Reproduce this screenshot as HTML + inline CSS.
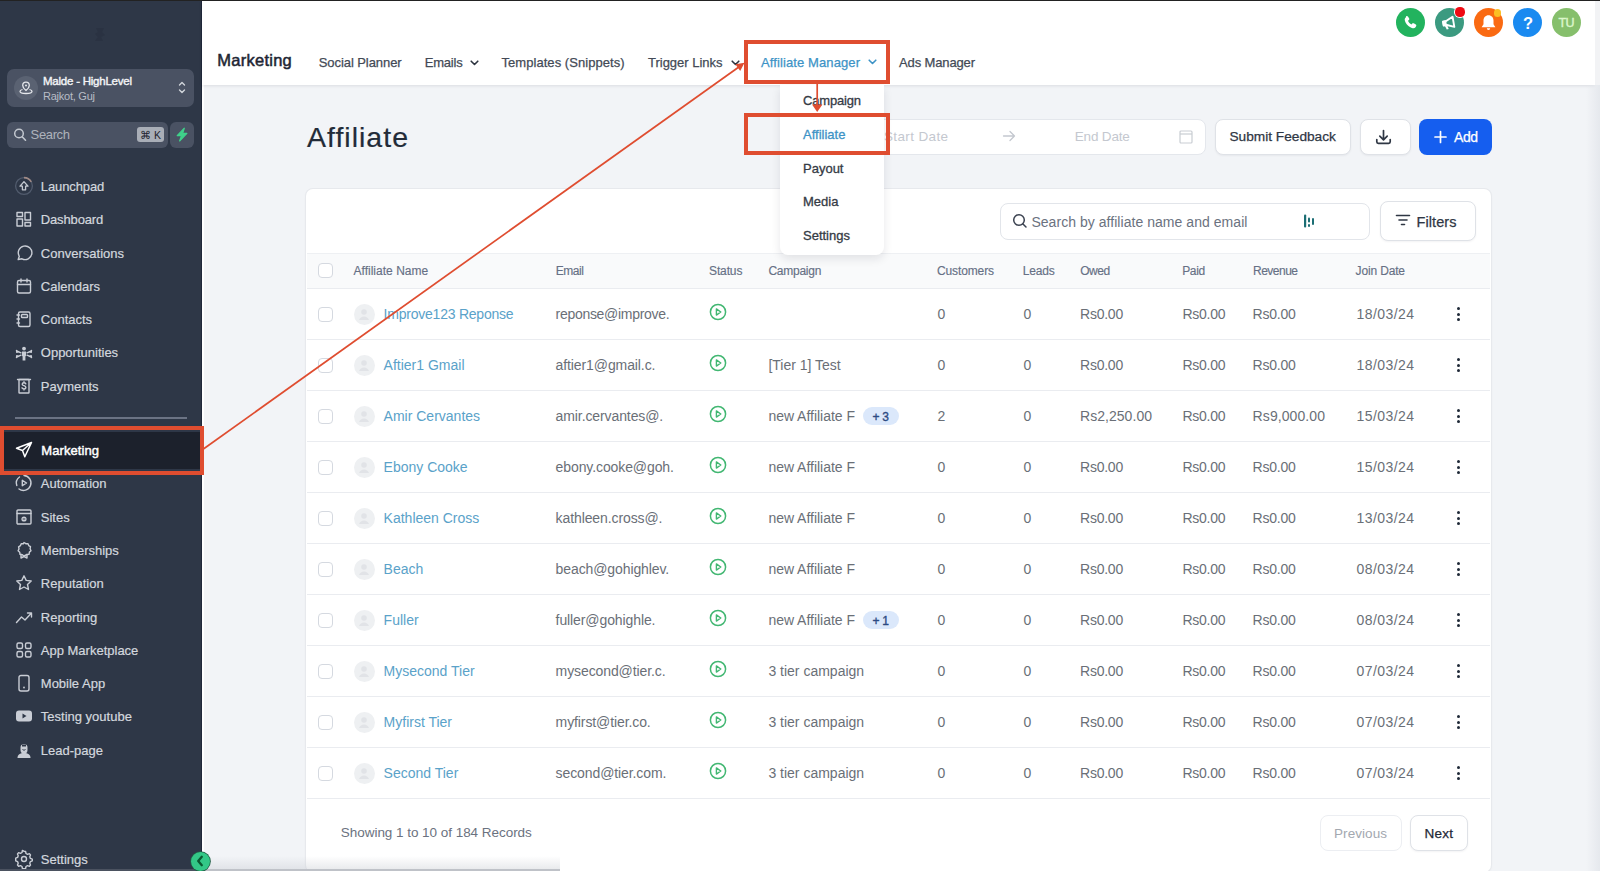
<!DOCTYPE html>
<html><head><meta charset="utf-8">
<style>
*{box-sizing:border-box;margin:0;padding:0}
html,body{width:1600px;height:871px;overflow:hidden;background:#f2f4f7}
body{position:relative;font-family:"Liberation Sans",sans-serif}
.a{position:absolute}
.t{position:absolute;white-space:nowrap;line-height:1}
svg.a{overflow:visible}
</style></head><body>
<div class="a" style="left:0px;top:0px;width:1600px;height:871px;background:#f2f4f7"></div>
<div class="a" style="left:0px;top:0px;width:202px;height:871px;background:#2e3747"></div>
<div class="a" style="left:201px;top:0px;width:1px;height:871px;background:#20283a"></div>
<div class="a" style="left:202px;top:0px;width:2px;height:871px;background:#fff"></div>
<div class="a" style="left:202px;top:0px;width:1393px;height:85px;background:#fff;box-shadow:0 1px 3px rgba(16,24,40,.10)"></div>
<div class="a" style="left:1586px;top:85px;width:14px;height:786px;background:linear-gradient(to right, rgba(228,231,236,0), rgba(228,231,236,.9))"></div>
<div class="a" style="left:1595px;top:1px;width:5px;height:84px;background:#f2f3f5"></div>
<div class="a" style="left:0px;top:0px;width:1600px;height:1px;background:#222"></div>
<svg class="a" style="left:90px;top:24px;" width="20" height="20" viewBox="0 0 20 20"><path d="M6 4h8l-2 4 3 3-4 2 2 4H5l3-4-3-3 3-2z" fill="#262d3c" opacity=".45"/></svg>
<div class="a" style="left:7px;top:69px;width:187px;height:38px;background:#4a5263;border-radius:7px"></div>
<div class="a" style="left:14px;top:76px;width:24px;height:24px;border-radius:50%;background:#5a6272"></div>
<svg class="a" style="left:19px;top:80px;" width="14" height="15" viewBox="0 0 14 15"><path d="M7 2.2a3.3 3.3 0 0 1 3.3 3.3c0 2.3-3.3 5-3.3 5s-3.3-2.7-3.3-5A3.3 3.3 0 0 1 7 2.2z" fill="none" stroke="#e5e7eb" stroke-width="1.3"/><circle cx="7" cy="5.5" r="1" fill="#e5e7eb"/><path d="M3.5 9.5C1.8 10 1 10.6 1 11.3 1 12.6 3.7 13.5 7 13.5s6-.9 6-2.2c0-.7-.8-1.3-2.5-1.8" fill="none" stroke="#e5e7eb" stroke-width="1.3"/></svg>
<div class="t" style="left:43.0px;top:75.8px;font-size:11.5px;color:#f3f4f6;font-weight:normal;letter-spacing:-0.230px;-webkit-text-stroke:0.4px #f3f4f6;">Malde - HighLevel</div>
<div class="t" style="left:43.0px;top:90.5px;font-size:11px;color:#b8bdc6;font-weight:normal;letter-spacing:-0.241px;">Rajkot, Guj</div>
<svg class="a" style="left:177px;top:80px;" width="10" height="15" viewBox="0 0 10 15"><path d="M2.5 5 5 2.5 7.5 5M2.5 10 5 12.5 7.5 10" fill="none" stroke="#d1d5db" stroke-width="1.4" stroke-linecap="round" stroke-linejoin="round"/></svg>
<div class="a" style="left:7px;top:122px;width:161px;height:26px;background:#4a5263;border-radius:6px"></div>
<svg class="a" style="left:13px;top:127px;" width="14" height="15" viewBox="0 0 14 15"><circle cx="6" cy="6.5" r="4.3" fill="none" stroke="#c2c7cf" stroke-width="1.5"/><path d="M9.2 9.8 12.5 13.2" stroke="#c2c7cf" stroke-width="1.6" stroke-linecap="round"/></svg>
<div class="t" style="left:30.6px;top:127.8px;font-size:13px;color:#aeb3bc;font-weight:normal;letter-spacing:-0.358px;">Search</div>
<div class="a" style="left:137px;top:127px;width:27px;height:15px;background:#a9aeb7;border-radius:3px"></div>
<div class="t" style="left:140.0px;top:129.7px;font-size:10.5px;color:#1f2530;font-weight:normal;">⌘</div>
<div class="t" style="left:154.0px;top:129.7px;font-size:10.5px;color:#1f2530;font-weight:normal;">K</div>
<div class="a" style="left:170px;top:122px;width:24px;height:26px;background:#4a5263;border-radius:6px"></div>
<svg class="a" style="left:175px;top:127px;" width="14" height="15" viewBox="0 0 14 15"><path d="M9.3 1.2 2.2 8.6h4.3L4.6 14 11.9 6.4H7.6z" fill="#3fd18a" stroke="#3fd18a" stroke-width="1.2" stroke-linejoin="round"/></svg>
<svg class="a" style="left:15px;top:177.0px;" width="18" height="18" viewBox="0 0 18 18"><circle cx="9" cy="9" r="8.4" fill="none" stroke="#525c6e" stroke-width="1.3"/><path d="M9 .6a8.4 8.4 0 0 1 7.3 4.3" fill="none" stroke="#a08a86" stroke-width="1.6"/><path d="M9 4.6 5 9.2h2.4v3.6h3.2V9.2H13z" fill="none" stroke="#c3c8d0" stroke-width="1.3" stroke-linejoin="round"/></svg>
<div class="t" style="left:40.8px;top:179.9px;font-size:13px;color:#d3d7de;font-weight:normal;letter-spacing:-0.104px;-webkit-text-stroke:0.2px #d3d7de;">Launchpad</div>
<svg class="a" style="left:15px;top:210.3px;" width="18" height="18" viewBox="0 0 18 18"><rect x="2" y="2.5" width="5.5" height="4" fill="none" stroke="#c9cdd5" stroke-width="1.4" stroke-linecap="round" stroke-linejoin="round"/><rect x="10" y="2.5" width="5.5" height="7.5" fill="none" stroke="#c9cdd5" stroke-width="1.4" stroke-linecap="round" stroke-linejoin="round"/><rect x="2" y="9" width="5.5" height="7" fill="none" stroke="#c9cdd5" stroke-width="1.4" stroke-linecap="round" stroke-linejoin="round"/><rect x="10" y="12.5" width="5.5" height="3.5" fill="none" stroke="#c9cdd5" stroke-width="1.4" stroke-linecap="round" stroke-linejoin="round"/></svg>
<div class="t" style="left:40.8px;top:213.2px;font-size:13px;color:#d3d7de;font-weight:normal;letter-spacing:-0.149px;-webkit-text-stroke:0.2px #d3d7de;">Dashboard</div>
<svg class="a" style="left:15px;top:243.60000000000002px;" width="18" height="18" viewBox="0 0 18 18"><path d="M3.2 15.5 4.3 12.3A6.8 6.8 0 1 1 7 14.8z" fill="none" stroke="#c9cdd5" stroke-width="1.4" stroke-linecap="round" stroke-linejoin="round"/></svg>
<div class="t" style="left:40.8px;top:246.6px;font-size:13px;color:#d3d7de;font-weight:normal;letter-spacing:0.017px;-webkit-text-stroke:0.2px #d3d7de;">Conversations</div>
<svg class="a" style="left:15px;top:277.0px;" width="18" height="18" viewBox="0 0 18 18"><rect x="2.5" y="3.5" width="13" height="12.5" rx="1.5" fill="none" stroke="#c9cdd5" stroke-width="1.4" stroke-linecap="round" stroke-linejoin="round"/><path d="M2.5 7.5h13M6 2v3M12 2v3" fill="none" stroke="#c9cdd5" stroke-width="1.4" stroke-linecap="round" stroke-linejoin="round"/></svg>
<div class="t" style="left:40.8px;top:279.9px;font-size:13px;color:#d3d7de;font-weight:normal;-webkit-text-stroke:0.2px #d3d7de;">Calendars</div>
<svg class="a" style="left:15px;top:310.2px;" width="18" height="18" viewBox="0 0 18 18"><rect x="3.5" y="2" width="11.5" height="14.5" rx="1.5" fill="none" stroke="#c9cdd5" stroke-width="1.4" stroke-linecap="round" stroke-linejoin="round"/><rect x="6.5" y="4.5" width="6" height="3" rx=".8" fill="none" stroke="#c9cdd5" stroke-width="1.4" stroke-linecap="round" stroke-linejoin="round"/><path d="M2 5h2.5M2 9h2.5M2 13h2.5" fill="none" stroke="#c9cdd5" stroke-width="1.4" stroke-linecap="round" stroke-linejoin="round"/></svg>
<div class="t" style="left:40.8px;top:313.1px;font-size:13px;color:#d3d7de;font-weight:normal;-webkit-text-stroke:0.2px #d3d7de;">Contacts</div>
<svg class="a" style="left:15px;top:343.5px;" width="18" height="18" viewBox="0 0 18 18"><circle cx="9" cy="4.6" r="1.9" fill="#c9cdd5"/><path d="M7 7.5h4v4.3l-.6.6v4h-2.8v-4l-.6-.6z" fill="#c9cdd5"/><path d="M6 8.8 1.8 7M12 8.8 16.2 7M6 11.2 1.8 13M12 11.2 16.2 13" fill="none" stroke="#c9cdd5" stroke-width="1.4" stroke-linecap="round" stroke-linejoin="round" stroke-width="1.2"/><path d="M1.5 6.5l.3 1.8 1.5-.6M16.5 6.5l-.3 1.8-1.5-.6M1.5 13.5l.3-1.8 1.5.6M16.5 13.5l-.3-1.8-1.5.6" fill="none" stroke="#c9cdd5" stroke-width="1.4" stroke-linecap="round" stroke-linejoin="round" stroke-width="1.1"/></svg>
<div class="t" style="left:40.8px;top:346.4px;font-size:13px;color:#d3d7de;font-weight:normal;-webkit-text-stroke:0.2px #d3d7de;">Opportunities</div>
<svg class="a" style="left:15px;top:376.8px;" width="18" height="18" viewBox="0 0 18 18"><path d="M2.5 2.5h13" fill="none" stroke="#c9cdd5" stroke-width="1.4" stroke-linecap="round" stroke-linejoin="round"/><rect x="4" y="2.5" width="10" height="13.5" rx=".5" fill="none" stroke="#c9cdd5" stroke-width="1.4" stroke-linecap="round" stroke-linejoin="round"/><path d="M10.8 6.8c-.4-.7-1-1-1.8-1-1 0-1.8.5-1.8 1.4 0 1.9 3.7 1.1 3.7 3.2 0 .9-.8 1.5-1.9 1.5-.9 0-1.6-.4-2-1.1M9 4.8v1M9 11.9v1" fill="none" stroke="#c9cdd5" stroke-width="1.4" stroke-linecap="round" stroke-linejoin="round" stroke-width="1.3"/></svg>
<div class="t" style="left:40.8px;top:379.8px;font-size:13px;color:#d3d7de;font-weight:normal;-webkit-text-stroke:0.2px #d3d7de;">Payments</div>
<div class="a" style="left:15px;top:417px;width:172px;height:1.5px;background:#6b7384"></div>
<div class="a" style="left:4px;top:432px;width:196px;height:37px;background:#1c212c"></div>
<svg class="a" style="left:15px;top:441px;" width="18" height="18" viewBox="0 0 18 18"><path d="M16.5 1.5 1.5 7.2l6 2.3 2.3 6.3z M16.5 1.5 7.5 9.5" fill="none" stroke="#ffffff" stroke-width="1.5" stroke-linejoin="round"/></svg>
<div class="t" style="left:41.3px;top:443.9px;font-size:13px;color:#ffffff;font-weight:normal;letter-spacing:0.078px;-webkit-text-stroke:0.45px #ffffff;">Marketing</div>
<svg class="a" style="left:15px;top:474.3px;" width="18" height="18" viewBox="0 0 18 18"><path d="M9 1.5A7.5 7.5 0 1 1 4 15" fill="none" stroke="#c9cdd5" stroke-width="1.4" stroke-linecap="round" stroke-linejoin="round"/><path d="M1.8 11.5A7.5 7.5 0 0 1 4.5 3" fill="none" stroke="#c9cdd5" stroke-width="1.4" stroke-linecap="round" stroke-linejoin="round"/><path d="M7.3 6.3v5.4L11.5 9z" fill="none" stroke="#c9cdd5" stroke-width="1.4" stroke-linecap="round" stroke-linejoin="round"/></svg>
<div class="t" style="left:40.8px;top:477.2px;font-size:13px;color:#d3d7de;font-weight:normal;-webkit-text-stroke:0.2px #d3d7de;">Automation</div>
<svg class="a" style="left:15px;top:507.6px;" width="18" height="18" viewBox="0 0 18 18"><rect x="2" y="2" width="14" height="14" rx="1" fill="none" stroke="#c9cdd5" stroke-width="1.4" stroke-linecap="round" stroke-linejoin="round"/><path d="M2 5.5h14" fill="none" stroke="#c9cdd5" stroke-width="1.4" stroke-linecap="round" stroke-linejoin="round"/><circle cx="9" cy="11" r="2.6" fill="#c9cdd5"/><path d="M7.7 11h2.6" stroke="#2e3747" stroke-width="1"/></svg>
<div class="t" style="left:40.8px;top:510.6px;font-size:13px;color:#d3d7de;font-weight:normal;-webkit-text-stroke:0.2px #d3d7de;">Sites</div>
<svg class="a" style="left:15px;top:541.0px;" width="18" height="18" viewBox="0 0 18 18"><path d="M9 1.5l1.8 1.2 2.1-.1.8 2 1.8 1.1-.4 2.1.9 1.9-1.6 1.4-.3 2.1-2.1.3L9 15l-1.9-1.4-2.1-.3-.3-2.1L3.1 9.8 4 7.9l-.4-2.1 1.8-1.1.8-2 2.1.1z" fill="none" stroke="#c9cdd5" stroke-width="1.4" stroke-linecap="round" stroke-linejoin="round"/><path d="M6 13.5v3.5l3-1.5 3 1.5v-3.5" fill="none" stroke="#c9cdd5" stroke-width="1.4" stroke-linecap="round" stroke-linejoin="round"/></svg>
<div class="t" style="left:40.8px;top:544.0px;font-size:13px;color:#d3d7de;font-weight:normal;-webkit-text-stroke:0.2px #d3d7de;">Memberships</div>
<svg class="a" style="left:15px;top:574.2px;" width="18" height="18" viewBox="0 0 18 18"><path d="M9 1.8l2.2 4.6 5 .6-3.7 3.5 1 5L9 13l-4.5 2.5 1-5L1.8 7l5-.6z" fill="none" stroke="#c9cdd5" stroke-width="1.4" stroke-linecap="round" stroke-linejoin="round"/></svg>
<div class="t" style="left:40.8px;top:577.2px;font-size:13px;color:#d3d7de;font-weight:normal;-webkit-text-stroke:0.2px #d3d7de;">Reputation</div>
<svg class="a" style="left:15px;top:607.5px;" width="18" height="18" viewBox="0 0 18 18"><path d="M1.5 14.5 6.5 9l3.5 3 6.5-7M12.5 5h4v4" fill="none" stroke="#c9cdd5" stroke-width="1.4" stroke-linecap="round" stroke-linejoin="round"/></svg>
<div class="t" style="left:40.8px;top:610.5px;font-size:13px;color:#d3d7de;font-weight:normal;-webkit-text-stroke:0.2px #d3d7de;">Reporting</div>
<svg class="a" style="left:15px;top:640.8px;" width="18" height="18" viewBox="0 0 18 18"><rect x="2" y="2" width="5.5" height="5.5" rx="1.5" fill="none" stroke="#c9cdd5" stroke-width="1.4" stroke-linecap="round" stroke-linejoin="round"/><rect x="10.5" y="2" width="5.5" height="5.5" rx="1.5" fill="none" stroke="#c9cdd5" stroke-width="1.4" stroke-linecap="round" stroke-linejoin="round"/><rect x="2" y="10.5" width="5.5" height="5.5" rx="1.5" fill="none" stroke="#c9cdd5" stroke-width="1.4" stroke-linecap="round" stroke-linejoin="round"/><rect x="10.5" y="10.5" width="5.5" height="5.5" rx="1.5" fill="none" stroke="#c9cdd5" stroke-width="1.4" stroke-linecap="round" stroke-linejoin="round"/></svg>
<div class="t" style="left:40.8px;top:643.8px;font-size:13px;color:#d3d7de;font-weight:normal;-webkit-text-stroke:0.2px #d3d7de;">App Marketplace</div>
<svg class="a" style="left:15px;top:674.0px;" width="18" height="18" viewBox="0 0 18 18"><rect x="4" y="1.5" width="10" height="15.5" rx="2" fill="none" stroke="#c9cdd5" stroke-width="1.4" stroke-linecap="round" stroke-linejoin="round"/><circle cx="9" cy="13.5" r=".9" fill="#c9cdd5"/></svg>
<div class="t" style="left:40.8px;top:677.0px;font-size:13px;color:#d3d7de;font-weight:normal;-webkit-text-stroke:0.2px #d3d7de;">Mobile App</div>
<svg class="a" style="left:15px;top:707.4px;" width="18" height="18" viewBox="0 0 18 18"><rect x="1" y="3.5" width="16" height="11" rx="3" fill="#c9cdd5"/><path d="M7.5 6.5v5l4-2.5z" fill="#2e3747"/></svg>
<div class="t" style="left:40.8px;top:710.4px;font-size:13px;color:#d3d7de;font-weight:normal;-webkit-text-stroke:0.2px #d3d7de;">Testing youtube</div>
<svg class="a" style="left:15px;top:740.7px;" width="18" height="18" viewBox="0 0 18 18"><path d="M5.5 6.5a3.5 3.5 0 0 1 7 0v2.5a3.5 3.5 0 0 1-7 0z" fill="#c9cdd5"/><path d="M7 3.5h4v2H7z" fill="#2e3747"/><path d="M2.5 17c0-3.2 2.5-5 6.5-5s6.5 1.8 6.5 5z" fill="#c9cdd5"/><path d="M7.5 8.5c.5.8 2.5.8 3 0" stroke="#2e3747" stroke-width="1" fill="none"/></svg>
<div class="t" style="left:40.8px;top:743.7px;font-size:13px;color:#d3d7de;font-weight:normal;-webkit-text-stroke:0.2px #d3d7de;">Lead-page</div>
<svg class="a" style="left:15px;top:849.6px;" width="18" height="18" viewBox="0 0 18 18"><path d="M9 1.2l1.6.3.4 2 1.5.9 1.9-.7 1.1 1.2-.7 1.9.6 1.6 1.9.8v1.6l-1.9.8-.6 1.6.7 1.9-1.1 1.2-1.9-.7-1.5.9-.4 2-1.6.3-1.6-.3-.4-2-1.5-.9-1.9.7-1.1-1.2.7-1.9-.6-1.6-1.9-.8V8.2l1.9-.8.6-1.6-.7-1.9 1.1-1.2 1.9.7 1.5-.9.4-2z" fill="none" stroke="#c9cdd5" stroke-width="1.4" stroke-linecap="round" stroke-linejoin="round"/><circle cx="9" cy="9" r="2.5" fill="none" stroke="#c9cdd5" stroke-width="1.4" stroke-linecap="round" stroke-linejoin="round"/></svg>
<div class="t" style="left:40.8px;top:852.6px;font-size:13px;color:#d3d7de;font-weight:normal;-webkit-text-stroke:0.2px #d3d7de;">Settings</div>
<div class="t" style="left:217.3px;top:52.4px;font-size:16.5px;color:#1e2633;font-weight:normal;letter-spacing:0.257px;-webkit-text-stroke:0.5px #1e2633;">Marketing</div>
<div class="t" style="left:318.7px;top:55.9px;font-size:13px;color:#434a56;font-weight:normal;letter-spacing:-0.063px;-webkit-text-stroke:0.25px #434a56;">Social Planner</div>
<div class="t" style="left:424.7px;top:55.7px;font-size:13px;color:#434a56;font-weight:normal;letter-spacing:-0.201px;-webkit-text-stroke:0.25px #434a56;">Emails</div>
<svg class="a" style="left:470px;top:59.5px;" width="9" height="6" viewBox="0 0 9 6"><path d="M1.2 1.2 4.5 4.5 7.8 1.2" fill="none" stroke="#2d3440" stroke-width="1.6" stroke-linecap="round" stroke-linejoin="round"/></svg>
<div class="t" style="left:501.5px;top:55.7px;font-size:13px;color:#434a56;font-weight:normal;letter-spacing:0.047px;-webkit-text-stroke:0.25px #434a56;">Templates (Snippets)</div>
<div class="t" style="left:648.0px;top:55.7px;font-size:13px;color:#434a56;font-weight:normal;letter-spacing:-0.013px;-webkit-text-stroke:0.25px #434a56;">Trigger Links</div>
<svg class="a" style="left:730.5px;top:59.5px;" width="9" height="6" viewBox="0 0 9 6"><path d="M1.2 1.2 4.5 4.5 7.8 1.2" fill="none" stroke="#2d3440" stroke-width="1.6" stroke-linecap="round" stroke-linejoin="round"/></svg>
<div class="t" style="left:761.0px;top:55.7px;font-size:13px;color:#3d93c6;font-weight:normal;letter-spacing:0.106px;-webkit-text-stroke:0.25px #3d93c6;">Affiliate Manager</div>
<svg class="a" style="left:868px;top:58.5px;" width="9" height="6" viewBox="0 0 9 6"><path d="M1.2 1.2 4.5 4.5 7.8 1.2" fill="none" stroke="#3d93c6" stroke-width="1.6" stroke-linecap="round" stroke-linejoin="round"/></svg>
<div class="t" style="left:899.0px;top:55.7px;font-size:13px;color:#434a56;font-weight:normal;letter-spacing:-0.132px;-webkit-text-stroke:0.25px #434a56;">Ads Manager</div>
<div class="a" style="left:1395.7px;top:7.699999999999999px;width:29.6px;height:29.6px;border-radius:50%;background:#22b35e"></div>
<svg class="a" style="left:1401px;top:13px;" width="19" height="19" viewBox="0 0 19 19"><path d="M5.2 3.2c.6-.4 1.3-.3 1.7.3l1.3 2c.3.6.2 1.2-.3 1.6l-.9.7c.7 1.6 1.9 2.9 3.5 3.7l.7-.9c.4-.5 1.1-.6 1.6-.3l2 1.3c.6.4.7 1.1.3 1.7l-.6.9c-.6.9-1.7 1.3-2.8 1C7.9 14.3 4.7 11.1 3.8 7.3c-.3-1.1.1-2.2 1-2.8z" fill="#fff"/></svg>
<div class="a" style="left:1434.7px;top:7.699999999999999px;width:29.6px;height:29.6px;border-radius:50%;background:#3b9a80"></div>
<svg class="a" style="left:1440px;top:13px;" width="19" height="19" viewBox="0 0 19 19"><g transform="rotate(-10 9.5 9.5)"><path d="M3.2 7.5h3.3L13.5 4.3v10.4L6.5 11.5H3.2z" fill="none" stroke="#fff" stroke-width="1.9" stroke-linejoin="round"/><path d="M2.5 6.8h4v5.4h-4z" fill="#fff"/><path d="M4.3 12l1.3 3.8h2L6.8 12z" fill="#fff"/></g></svg>
<div class="a" style="left:1454.2px;top:6.2px;width:11.6px;height:11.6px;border-radius:50%;background:#ffffff"></div>
<div class="a" style="left:1455.4px;top:7.4px;width:9.2px;height:9.2px;border-radius:50%;background:#ef0a12"></div>
<div class="a" style="left:1473.7px;top:7.699999999999999px;width:29.6px;height:29.6px;border-radius:50%;background:#fa6a12"></div>
<svg class="a" style="left:1479px;top:13px;" width="19" height="19" viewBox="0 0 19 19"><path d="M9.5 2.2c-3 0-5 2.3-5 5.2v3.8L2.6 14.2h13.8l-1.9-3V7.4c0-2.9-2-5.2-5-5.2z" fill="#fff"/><path d="M7.8 15.3h3.4a1.7 1.7 0 0 1-3.4 0z" fill="#fff"/></svg>
<div class="a" style="left:1493.7px;top:9.2px;width:7.6px;height:7.6px;border-radius:50%;background:#fbbf24"></div>
<div class="a" style="left:1512.7px;top:7.699999999999999px;width:29.6px;height:29.6px;border-radius:50%;background:#1a8af0"></div>
<div class="t" style="left:1522.9px;top:14.9px;font-size:16.5px;color:#ffffff;font-weight:bold;">?</div>
<div class="a" style="left:1551.7px;top:7.699999999999999px;width:29.6px;height:29.6px;border-radius:50%;background:#86bf6c"></div>
<div class="t" style="left:1558.5px;top:17.0px;font-size:12.5px;color:#dcf7cc;font-weight:normal;letter-spacing:-0.662px;-webkit-text-stroke:0.4px #dcf7cc;">TU</div>
<div class="t" style="left:307.0px;top:123.0px;font-size:28.5px;color:#222b38;font-weight:normal;letter-spacing:1.007px;-webkit-text-stroke:0.2px #222b38;">Affiliate</div>
<div class="a" style="left:870px;top:119px;width:336px;height:36px;background:#fff;border:1px solid #e4e7ec;border-radius:8px"></div>
<div class="t" style="left:884.0px;top:129.8px;font-size:13.5px;color:#c4c8cf;font-weight:normal;letter-spacing:0.359px;">Start Date</div>
<svg class="a" style="left:1002px;top:130px;" width="14" height="12" viewBox="0 0 14 12"><path d="M1.5 6h11M8 1.5 12.5 6 8 10.5" fill="none" stroke="#c4c8cf" stroke-width="1.3" stroke-linecap="round" stroke-linejoin="round"/></svg>
<div class="t" style="left:1074.8px;top:129.8px;font-size:13.5px;color:#c4c8cf;font-weight:normal;letter-spacing:-0.183px;">End Date</div>
<svg class="a" style="left:1179px;top:130px;" width="14" height="14" viewBox="0 0 14 14"><rect x="1" y="1" width="12" height="12" rx="1" fill="none" stroke="#c9cdd3" stroke-width="1.2"/><path d="M1 4h12" stroke="#c9cdd3" stroke-width="1.2"/></svg>
<div class="a" style="left:1214.5px;top:119px;width:136.5px;height:36px;background:#fff;border:1px solid #dfe2e7;border-radius:8px;box-shadow:0 1px 2px rgba(16,24,40,.05)"></div>
<div class="t" style="left:1229.4px;top:129.8px;font-size:13.7px;color:#2f3744;font-weight:normal;letter-spacing:-0.000px;-webkit-text-stroke:0.25px #2f3744;">Submit Feedback</div>
<div class="a" style="left:1359.5px;top:119px;width:51px;height:36px;background:#fff;border:1px solid #dfe2e7;border-radius:8px;box-shadow:0 1px 2px rgba(16,24,40,.05)"></div>
<svg class="a" style="left:1375px;top:129px;" width="17" height="16" viewBox="0 0 17 16"><path d="M8.5 1.5v9M4.8 7.2 8.5 10.8l3.7-3.6M1.8 10.5v2.3c0 .9.6 1.5 1.5 1.5h10.4c.9 0 1.5-.6 1.5-1.5v-2.3" fill="none" stroke="#2f3744" stroke-width="1.7" stroke-linecap="round" stroke-linejoin="round"/></svg>
<div class="a" style="left:1418.5px;top:119px;width:73px;height:36px;background:#155eef;border-radius:8px"></div>
<svg class="a" style="left:1433px;top:130px;" width="15" height="14" viewBox="0 0 15 14"><path d="M7.5 1.5v11M2 7h11" stroke="#fff" stroke-width="1.7" stroke-linecap="round"/></svg>
<div class="t" style="left:1454.0px;top:129.5px;font-size:14px;color:#ffffff;font-weight:normal;letter-spacing:-0.455px;-webkit-text-stroke:0.25px #ffffff;">Add</div>
<div class="a" style="left:306px;top:189px;width:1184.5px;height:683px;background:#fff;border-radius:7px;box-shadow:0 0 0 1px #e7e9ed, 0 1px 3px rgba(16,24,40,.06)"></div>
<div class="a" style="left:999.5px;top:203px;width:370px;height:37px;background:#fff;border:1px solid #e2e5ea;border-radius:8px"></div>
<svg class="a" style="left:1012px;top:213px;" width="16" height="16" viewBox="0 0 16 16"><circle cx="7" cy="7" r="5.3" fill="none" stroke="#3b4250" stroke-width="1.5"/><path d="M11 11l3 3" stroke="#3b4250" stroke-width="1.5" stroke-linecap="round"/></svg>
<div class="t" style="left:1031.4px;top:215.1px;font-size:14px;color:#6b7280;font-weight:normal;letter-spacing:0.045px;">Search by affiliate name and email</div>
<svg class="a" style="left:1303px;top:213px;" width="13" height="16" viewBox="0 0 13 16"><rect x="1" y="1.5" width="2.2" height="13" rx="1" fill="#1c6e74"/><rect x="5" y="4.5" width="2" height="5" rx="1" fill="#1c6e74"/><rect x="5" y="11" width="2" height="3" rx="1" fill="#1c6e74"/><rect x="9" y="5" width="2" height="7" rx="1" fill="#1c6e74"/></svg>
<div class="a" style="left:1379.5px;top:201px;width:96px;height:40px;background:#fff;border:1px solid #dfe2e7;border-radius:8px;box-shadow:0 1px 2px rgba(16,24,40,.05)"></div>
<svg class="a" style="left:1395px;top:213px;" width="16" height="14" viewBox="0 0 16 14"><path d="M1.5 2.5h13M4 7h8M6.5 11.5h3" stroke="#2f3744" stroke-width="1.6" stroke-linecap="round"/></svg>
<div class="t" style="left:1416.5px;top:214.7px;font-size:14.5px;color:#2f3744;font-weight:normal;letter-spacing:0.088px;-webkit-text-stroke:0.25px #2f3744;">Filters</div>
<div class="a" style="left:307px;top:252.5px;width:1182.5px;height:36.5px;background:#f9fafb;border-top:1px solid #eef0f3;border-bottom:1px solid #eaecf0"></div>
<div class="a" style="left:318px;top:263px;width:15px;height:15px;background:#fff;border:1px solid #d5d9e0;border-radius:4px"></div>
<div class="t" style="left:353.5px;top:264.5px;font-size:12px;color:#667085;font-weight:normal;letter-spacing:0.017px;-webkit-text-stroke:0.15px #667085;">Affiliate Name</div>
<div class="t" style="left:555.8px;top:264.5px;font-size:12px;color:#667085;font-weight:normal;letter-spacing:-0.501px;-webkit-text-stroke:0.15px #667085;">Email</div>
<div class="t" style="left:709.0px;top:264.5px;font-size:12px;color:#667085;font-weight:normal;letter-spacing:-0.124px;-webkit-text-stroke:0.15px #667085;">Status</div>
<div class="t" style="left:768.4px;top:264.5px;font-size:12px;color:#667085;font-weight:normal;letter-spacing:-0.242px;-webkit-text-stroke:0.15px #667085;">Campaign</div>
<div class="t" style="left:937.0px;top:264.5px;font-size:12px;color:#667085;font-weight:normal;letter-spacing:-0.126px;-webkit-text-stroke:0.15px #667085;">Customers</div>
<div class="t" style="left:1022.8px;top:264.5px;font-size:12px;color:#667085;font-weight:normal;letter-spacing:-0.173px;-webkit-text-stroke:0.15px #667085;">Leads</div>
<div class="t" style="left:1080.2px;top:264.5px;font-size:12px;color:#667085;font-weight:normal;letter-spacing:-0.449px;-webkit-text-stroke:0.15px #667085;">Owed</div>
<div class="t" style="left:1182.2px;top:264.5px;font-size:12px;color:#667085;font-weight:normal;letter-spacing:-0.339px;-webkit-text-stroke:0.15px #667085;">Paid</div>
<div class="t" style="left:1253.0px;top:264.5px;font-size:12px;color:#667085;font-weight:normal;letter-spacing:-0.505px;-webkit-text-stroke:0.15px #667085;">Revenue</div>
<div class="t" style="left:1355.6px;top:264.5px;font-size:12px;color:#667085;font-weight:normal;letter-spacing:-0.162px;-webkit-text-stroke:0.15px #667085;">Join Date</div>
<div class="a" style="left:307px;top:339px;width:1182.5px;height:1px;background:#eaecf0"></div>
<div class="a" style="left:318px;top:306.5px;width:15px;height:15px;background:#fff;border:1px solid #d5d9e0;border-radius:4px"></div>
<div class="a" style="left:353.5px;top:303.5px;width:21px;height:21px;border-radius:50%;background:#eef0f2"></div>
<svg class="a" style="left:356px;top:306px;" width="16" height="16" viewBox="0 0 16 16"><circle cx="8" cy="6" r="2.8" fill="#e1e3e7"/><path d="M3 14c.8-2.4 2.8-3.6 5-3.6s4.2 1.2 5 3.6" fill="#e1e3e7"/></svg>
<div class="t" style="left:383.6px;top:307.3px;font-size:14px;color:#5aa2c9;font-weight:normal;letter-spacing:-0.227px;">Improve123 Reponse</div>
<div class="t" style="left:555.6px;top:307.3px;font-size:14px;color:#6a6f77;font-weight:normal;letter-spacing:-0.299px;">reponse@improve.</div>
<svg class="a" style="left:709px;top:303px;" width="18" height="18" viewBox="0 0 18 18"><circle cx="9" cy="9" r="7.6" fill="none" stroke="#42b772" stroke-width="1.5"/><path d="M7.4 5.9v6.2L11.8 9z" fill="none" stroke="#42b772" stroke-width="1.4" stroke-linejoin="round"/></svg>
<div class="t" style="left:937.4px;top:307.3px;font-size:14px;color:#6a6f77;font-weight:normal;">0</div>
<div class="t" style="left:1023.6px;top:307.3px;font-size:14px;color:#6a6f77;font-weight:normal;">0</div>
<div class="t" style="left:1080.0px;top:307.3px;font-size:14px;color:#6a6f77;font-weight:normal;letter-spacing:-0.231px;">Rs0.00</div>
<div class="t" style="left:1182.4px;top:307.3px;font-size:14px;color:#6a6f77;font-weight:normal;letter-spacing:-0.231px;">Rs0.00</div>
<div class="t" style="left:1252.6px;top:307.3px;font-size:14px;color:#6a6f77;font-weight:normal;letter-spacing:-0.231px;">Rs0.00</div>
<div class="t" style="left:1356.5px;top:307.3px;font-size:14px;color:#6a6f77;font-weight:normal;letter-spacing:0.430px;">18/03/24</div>
<div class="a" style="left:1456.9px;top:307.2px;width:3.2px;height:3.2px;border-radius:50%;background:#1f2937"></div>
<div class="a" style="left:1456.9px;top:312.6px;width:3.2px;height:3.2px;border-radius:50%;background:#1f2937"></div>
<div class="a" style="left:1456.9px;top:318.0px;width:3.2px;height:3.2px;border-radius:50%;background:#1f2937"></div>
<div class="a" style="left:307px;top:390px;width:1182.5px;height:1px;background:#eaecf0"></div>
<div class="a" style="left:318px;top:357.5px;width:15px;height:15px;background:#fff;border:1px solid #d5d9e0;border-radius:4px"></div>
<div class="a" style="left:353.5px;top:354.5px;width:21px;height:21px;border-radius:50%;background:#eef0f2"></div>
<svg class="a" style="left:356px;top:357px;" width="16" height="16" viewBox="0 0 16 16"><circle cx="8" cy="6" r="2.8" fill="#e1e3e7"/><path d="M3 14c.8-2.4 2.8-3.6 5-3.6s4.2 1.2 5 3.6" fill="#e1e3e7"/></svg>
<div class="t" style="left:383.6px;top:358.3px;font-size:14px;color:#5aa2c9;font-weight:normal;">Aftier1 Gmail</div>
<div class="t" style="left:555.6px;top:358.3px;font-size:14px;color:#6a6f77;font-weight:normal;letter-spacing:-0.1px;">aftier1@gmail.c.</div>
<svg class="a" style="left:709px;top:354px;" width="18" height="18" viewBox="0 0 18 18"><circle cx="9" cy="9" r="7.6" fill="none" stroke="#42b772" stroke-width="1.5"/><path d="M7.4 5.9v6.2L11.8 9z" fill="none" stroke="#42b772" stroke-width="1.4" stroke-linejoin="round"/></svg>
<div class="t" style="left:768.4px;top:358.3px;font-size:14px;color:#6a6f77;font-weight:normal;">[Tier 1] Test</div>
<div class="t" style="left:937.4px;top:358.3px;font-size:14px;color:#6a6f77;font-weight:normal;">0</div>
<div class="t" style="left:1023.6px;top:358.3px;font-size:14px;color:#6a6f77;font-weight:normal;">0</div>
<div class="t" style="left:1080.0px;top:358.3px;font-size:14px;color:#6a6f77;font-weight:normal;letter-spacing:-0.231px;">Rs0.00</div>
<div class="t" style="left:1182.4px;top:358.3px;font-size:14px;color:#6a6f77;font-weight:normal;letter-spacing:-0.231px;">Rs0.00</div>
<div class="t" style="left:1252.6px;top:358.3px;font-size:14px;color:#6a6f77;font-weight:normal;letter-spacing:-0.231px;">Rs0.00</div>
<div class="t" style="left:1356.5px;top:358.3px;font-size:14px;color:#6a6f77;font-weight:normal;letter-spacing:0.430px;">18/03/24</div>
<div class="a" style="left:1456.9px;top:358.2px;width:3.2px;height:3.2px;border-radius:50%;background:#1f2937"></div>
<div class="a" style="left:1456.9px;top:363.6px;width:3.2px;height:3.2px;border-radius:50%;background:#1f2937"></div>
<div class="a" style="left:1456.9px;top:369.0px;width:3.2px;height:3.2px;border-radius:50%;background:#1f2937"></div>
<div class="a" style="left:307px;top:441px;width:1182.5px;height:1px;background:#eaecf0"></div>
<div class="a" style="left:318px;top:408.5px;width:15px;height:15px;background:#fff;border:1px solid #d5d9e0;border-radius:4px"></div>
<div class="a" style="left:353.5px;top:405.5px;width:21px;height:21px;border-radius:50%;background:#eef0f2"></div>
<svg class="a" style="left:356px;top:408px;" width="16" height="16" viewBox="0 0 16 16"><circle cx="8" cy="6" r="2.8" fill="#e1e3e7"/><path d="M3 14c.8-2.4 2.8-3.6 5-3.6s4.2 1.2 5 3.6" fill="#e1e3e7"/></svg>
<div class="t" style="left:383.6px;top:409.3px;font-size:14px;color:#5aa2c9;font-weight:normal;">Amir Cervantes</div>
<div class="t" style="left:555.6px;top:409.3px;font-size:14px;color:#6a6f77;font-weight:normal;letter-spacing:-0.1px;">amir.cervantes@.</div>
<svg class="a" style="left:709px;top:405px;" width="18" height="18" viewBox="0 0 18 18"><circle cx="9" cy="9" r="7.6" fill="none" stroke="#42b772" stroke-width="1.5"/><path d="M7.4 5.9v6.2L11.8 9z" fill="none" stroke="#42b772" stroke-width="1.4" stroke-linejoin="round"/></svg>
<div class="t" style="left:768.4px;top:409.3px;font-size:14px;color:#6a6f77;font-weight:normal;letter-spacing:-0.021px;">new Affiliate F</div>
<div class="a" style="left:863px;top:406.5px;width:36px;height:18px;background:#dbe8fb;border-radius:9px"></div>
<div class="t" style="left:872.5px;top:410.5px;font-size:12px;color:#2c4a83;font-weight:normal;letter-spacing:-0.258px;-webkit-text-stroke:0.35px #2c4a83;">+ 3</div>
<div class="t" style="left:937.4px;top:409.3px;font-size:14px;color:#6a6f77;font-weight:normal;">2</div>
<div class="t" style="left:1023.6px;top:409.3px;font-size:14px;color:#6a6f77;font-weight:normal;">0</div>
<div class="t" style="left:1080.0px;top:409.3px;font-size:14px;color:#6a6f77;font-weight:normal;letter-spacing:0.044px;">Rs2,250.00</div>
<div class="t" style="left:1182.4px;top:409.3px;font-size:14px;color:#6a6f77;font-weight:normal;letter-spacing:-0.231px;">Rs0.00</div>
<div class="t" style="left:1252.6px;top:409.3px;font-size:14px;color:#6a6f77;font-weight:normal;letter-spacing:0.089px;">Rs9,000.00</div>
<div class="t" style="left:1356.5px;top:409.3px;font-size:14px;color:#6a6f77;font-weight:normal;letter-spacing:0.430px;">15/03/24</div>
<div class="a" style="left:1456.9px;top:409.2px;width:3.2px;height:3.2px;border-radius:50%;background:#1f2937"></div>
<div class="a" style="left:1456.9px;top:414.6px;width:3.2px;height:3.2px;border-radius:50%;background:#1f2937"></div>
<div class="a" style="left:1456.9px;top:420.0px;width:3.2px;height:3.2px;border-radius:50%;background:#1f2937"></div>
<div class="a" style="left:307px;top:492px;width:1182.5px;height:1px;background:#eaecf0"></div>
<div class="a" style="left:318px;top:459.5px;width:15px;height:15px;background:#fff;border:1px solid #d5d9e0;border-radius:4px"></div>
<div class="a" style="left:353.5px;top:456.5px;width:21px;height:21px;border-radius:50%;background:#eef0f2"></div>
<svg class="a" style="left:356px;top:459px;" width="16" height="16" viewBox="0 0 16 16"><circle cx="8" cy="6" r="2.8" fill="#e1e3e7"/><path d="M3 14c.8-2.4 2.8-3.6 5-3.6s4.2 1.2 5 3.6" fill="#e1e3e7"/></svg>
<div class="t" style="left:383.6px;top:460.3px;font-size:14px;color:#5aa2c9;font-weight:normal;">Ebony Cooke</div>
<div class="t" style="left:555.6px;top:460.3px;font-size:14px;color:#6a6f77;font-weight:normal;letter-spacing:-0.1px;">ebony.cooke@goh.</div>
<svg class="a" style="left:709px;top:456px;" width="18" height="18" viewBox="0 0 18 18"><circle cx="9" cy="9" r="7.6" fill="none" stroke="#42b772" stroke-width="1.5"/><path d="M7.4 5.9v6.2L11.8 9z" fill="none" stroke="#42b772" stroke-width="1.4" stroke-linejoin="round"/></svg>
<div class="t" style="left:768.4px;top:460.3px;font-size:14px;color:#6a6f77;font-weight:normal;letter-spacing:-0.021px;">new Affiliate F</div>
<div class="t" style="left:937.4px;top:460.3px;font-size:14px;color:#6a6f77;font-weight:normal;">0</div>
<div class="t" style="left:1023.6px;top:460.3px;font-size:14px;color:#6a6f77;font-weight:normal;">0</div>
<div class="t" style="left:1080.0px;top:460.3px;font-size:14px;color:#6a6f77;font-weight:normal;letter-spacing:-0.231px;">Rs0.00</div>
<div class="t" style="left:1182.4px;top:460.3px;font-size:14px;color:#6a6f77;font-weight:normal;letter-spacing:-0.231px;">Rs0.00</div>
<div class="t" style="left:1252.6px;top:460.3px;font-size:14px;color:#6a6f77;font-weight:normal;letter-spacing:-0.231px;">Rs0.00</div>
<div class="t" style="left:1356.5px;top:460.3px;font-size:14px;color:#6a6f77;font-weight:normal;letter-spacing:0.430px;">15/03/24</div>
<div class="a" style="left:1456.9px;top:460.2px;width:3.2px;height:3.2px;border-radius:50%;background:#1f2937"></div>
<div class="a" style="left:1456.9px;top:465.6px;width:3.2px;height:3.2px;border-radius:50%;background:#1f2937"></div>
<div class="a" style="left:1456.9px;top:471.0px;width:3.2px;height:3.2px;border-radius:50%;background:#1f2937"></div>
<div class="a" style="left:307px;top:543px;width:1182.5px;height:1px;background:#eaecf0"></div>
<div class="a" style="left:318px;top:510.5px;width:15px;height:15px;background:#fff;border:1px solid #d5d9e0;border-radius:4px"></div>
<div class="a" style="left:353.5px;top:507.5px;width:21px;height:21px;border-radius:50%;background:#eef0f2"></div>
<svg class="a" style="left:356px;top:510px;" width="16" height="16" viewBox="0 0 16 16"><circle cx="8" cy="6" r="2.8" fill="#e1e3e7"/><path d="M3 14c.8-2.4 2.8-3.6 5-3.6s4.2 1.2 5 3.6" fill="#e1e3e7"/></svg>
<div class="t" style="left:383.6px;top:511.3px;font-size:14px;color:#5aa2c9;font-weight:normal;">Kathleen Cross</div>
<div class="t" style="left:555.6px;top:511.3px;font-size:14px;color:#6a6f77;font-weight:normal;letter-spacing:-0.1px;">kathleen.cross@.</div>
<svg class="a" style="left:709px;top:507px;" width="18" height="18" viewBox="0 0 18 18"><circle cx="9" cy="9" r="7.6" fill="none" stroke="#42b772" stroke-width="1.5"/><path d="M7.4 5.9v6.2L11.8 9z" fill="none" stroke="#42b772" stroke-width="1.4" stroke-linejoin="round"/></svg>
<div class="t" style="left:768.4px;top:511.3px;font-size:14px;color:#6a6f77;font-weight:normal;letter-spacing:-0.021px;">new Affiliate F</div>
<div class="t" style="left:937.4px;top:511.3px;font-size:14px;color:#6a6f77;font-weight:normal;">0</div>
<div class="t" style="left:1023.6px;top:511.3px;font-size:14px;color:#6a6f77;font-weight:normal;">0</div>
<div class="t" style="left:1080.0px;top:511.3px;font-size:14px;color:#6a6f77;font-weight:normal;letter-spacing:-0.231px;">Rs0.00</div>
<div class="t" style="left:1182.4px;top:511.3px;font-size:14px;color:#6a6f77;font-weight:normal;letter-spacing:-0.231px;">Rs0.00</div>
<div class="t" style="left:1252.6px;top:511.3px;font-size:14px;color:#6a6f77;font-weight:normal;letter-spacing:-0.231px;">Rs0.00</div>
<div class="t" style="left:1356.5px;top:511.3px;font-size:14px;color:#6a6f77;font-weight:normal;letter-spacing:0.430px;">13/03/24</div>
<div class="a" style="left:1456.9px;top:511.2px;width:3.2px;height:3.2px;border-radius:50%;background:#1f2937"></div>
<div class="a" style="left:1456.9px;top:516.6px;width:3.2px;height:3.2px;border-radius:50%;background:#1f2937"></div>
<div class="a" style="left:1456.9px;top:522.0px;width:3.2px;height:3.2px;border-radius:50%;background:#1f2937"></div>
<div class="a" style="left:307px;top:594px;width:1182.5px;height:1px;background:#eaecf0"></div>
<div class="a" style="left:318px;top:561.5px;width:15px;height:15px;background:#fff;border:1px solid #d5d9e0;border-radius:4px"></div>
<div class="a" style="left:353.5px;top:558.5px;width:21px;height:21px;border-radius:50%;background:#eef0f2"></div>
<svg class="a" style="left:356px;top:561px;" width="16" height="16" viewBox="0 0 16 16"><circle cx="8" cy="6" r="2.8" fill="#e1e3e7"/><path d="M3 14c.8-2.4 2.8-3.6 5-3.6s4.2 1.2 5 3.6" fill="#e1e3e7"/></svg>
<div class="t" style="left:383.6px;top:562.3px;font-size:14px;color:#5aa2c9;font-weight:normal;">Beach</div>
<div class="t" style="left:555.6px;top:562.3px;font-size:14px;color:#6a6f77;font-weight:normal;letter-spacing:-0.1px;">beach@gohighlev.</div>
<svg class="a" style="left:709px;top:558px;" width="18" height="18" viewBox="0 0 18 18"><circle cx="9" cy="9" r="7.6" fill="none" stroke="#42b772" stroke-width="1.5"/><path d="M7.4 5.9v6.2L11.8 9z" fill="none" stroke="#42b772" stroke-width="1.4" stroke-linejoin="round"/></svg>
<div class="t" style="left:768.4px;top:562.3px;font-size:14px;color:#6a6f77;font-weight:normal;letter-spacing:-0.021px;">new Affiliate F</div>
<div class="t" style="left:937.4px;top:562.3px;font-size:14px;color:#6a6f77;font-weight:normal;">0</div>
<div class="t" style="left:1023.6px;top:562.3px;font-size:14px;color:#6a6f77;font-weight:normal;">0</div>
<div class="t" style="left:1080.0px;top:562.3px;font-size:14px;color:#6a6f77;font-weight:normal;letter-spacing:-0.231px;">Rs0.00</div>
<div class="t" style="left:1182.4px;top:562.3px;font-size:14px;color:#6a6f77;font-weight:normal;letter-spacing:-0.231px;">Rs0.00</div>
<div class="t" style="left:1252.6px;top:562.3px;font-size:14px;color:#6a6f77;font-weight:normal;letter-spacing:-0.231px;">Rs0.00</div>
<div class="t" style="left:1356.5px;top:562.3px;font-size:14px;color:#6a6f77;font-weight:normal;letter-spacing:0.430px;">08/03/24</div>
<div class="a" style="left:1456.9px;top:562.2px;width:3.2px;height:3.2px;border-radius:50%;background:#1f2937"></div>
<div class="a" style="left:1456.9px;top:567.6px;width:3.2px;height:3.2px;border-radius:50%;background:#1f2937"></div>
<div class="a" style="left:1456.9px;top:573.0px;width:3.2px;height:3.2px;border-radius:50%;background:#1f2937"></div>
<div class="a" style="left:307px;top:645px;width:1182.5px;height:1px;background:#eaecf0"></div>
<div class="a" style="left:318px;top:612.5px;width:15px;height:15px;background:#fff;border:1px solid #d5d9e0;border-radius:4px"></div>
<div class="a" style="left:353.5px;top:609.5px;width:21px;height:21px;border-radius:50%;background:#eef0f2"></div>
<svg class="a" style="left:356px;top:612px;" width="16" height="16" viewBox="0 0 16 16"><circle cx="8" cy="6" r="2.8" fill="#e1e3e7"/><path d="M3 14c.8-2.4 2.8-3.6 5-3.6s4.2 1.2 5 3.6" fill="#e1e3e7"/></svg>
<div class="t" style="left:383.6px;top:613.3px;font-size:14px;color:#5aa2c9;font-weight:normal;">Fuller</div>
<div class="t" style="left:555.6px;top:613.3px;font-size:14px;color:#6a6f77;font-weight:normal;letter-spacing:-0.1px;">fuller@gohighle.</div>
<svg class="a" style="left:709px;top:609px;" width="18" height="18" viewBox="0 0 18 18"><circle cx="9" cy="9" r="7.6" fill="none" stroke="#42b772" stroke-width="1.5"/><path d="M7.4 5.9v6.2L11.8 9z" fill="none" stroke="#42b772" stroke-width="1.4" stroke-linejoin="round"/></svg>
<div class="t" style="left:768.4px;top:613.3px;font-size:14px;color:#6a6f77;font-weight:normal;letter-spacing:-0.021px;">new Affiliate F</div>
<div class="a" style="left:863px;top:610.5px;width:36px;height:18px;background:#dbe8fb;border-radius:9px"></div>
<div class="t" style="left:872.5px;top:614.5px;font-size:12px;color:#2c4a83;font-weight:normal;letter-spacing:-0.258px;-webkit-text-stroke:0.35px #2c4a83;">+ 1</div>
<div class="t" style="left:937.4px;top:613.3px;font-size:14px;color:#6a6f77;font-weight:normal;">0</div>
<div class="t" style="left:1023.6px;top:613.3px;font-size:14px;color:#6a6f77;font-weight:normal;">0</div>
<div class="t" style="left:1080.0px;top:613.3px;font-size:14px;color:#6a6f77;font-weight:normal;letter-spacing:-0.231px;">Rs0.00</div>
<div class="t" style="left:1182.4px;top:613.3px;font-size:14px;color:#6a6f77;font-weight:normal;letter-spacing:-0.231px;">Rs0.00</div>
<div class="t" style="left:1252.6px;top:613.3px;font-size:14px;color:#6a6f77;font-weight:normal;letter-spacing:-0.231px;">Rs0.00</div>
<div class="t" style="left:1356.5px;top:613.3px;font-size:14px;color:#6a6f77;font-weight:normal;letter-spacing:0.430px;">08/03/24</div>
<div class="a" style="left:1456.9px;top:613.2px;width:3.2px;height:3.2px;border-radius:50%;background:#1f2937"></div>
<div class="a" style="left:1456.9px;top:618.6px;width:3.2px;height:3.2px;border-radius:50%;background:#1f2937"></div>
<div class="a" style="left:1456.9px;top:624.0px;width:3.2px;height:3.2px;border-radius:50%;background:#1f2937"></div>
<div class="a" style="left:307px;top:696px;width:1182.5px;height:1px;background:#eaecf0"></div>
<div class="a" style="left:318px;top:663.5px;width:15px;height:15px;background:#fff;border:1px solid #d5d9e0;border-radius:4px"></div>
<div class="a" style="left:353.5px;top:660.5px;width:21px;height:21px;border-radius:50%;background:#eef0f2"></div>
<svg class="a" style="left:356px;top:663px;" width="16" height="16" viewBox="0 0 16 16"><circle cx="8" cy="6" r="2.8" fill="#e1e3e7"/><path d="M3 14c.8-2.4 2.8-3.6 5-3.6s4.2 1.2 5 3.6" fill="#e1e3e7"/></svg>
<div class="t" style="left:383.6px;top:664.3px;font-size:14px;color:#5aa2c9;font-weight:normal;">Mysecond Tier</div>
<div class="t" style="left:555.6px;top:664.3px;font-size:14px;color:#6a6f77;font-weight:normal;letter-spacing:-0.1px;">mysecond@tier.c.</div>
<svg class="a" style="left:709px;top:660px;" width="18" height="18" viewBox="0 0 18 18"><circle cx="9" cy="9" r="7.6" fill="none" stroke="#42b772" stroke-width="1.5"/><path d="M7.4 5.9v6.2L11.8 9z" fill="none" stroke="#42b772" stroke-width="1.4" stroke-linejoin="round"/></svg>
<div class="t" style="left:768.4px;top:664.3px;font-size:14px;color:#6a6f77;font-weight:normal;">3 tier campaign</div>
<div class="t" style="left:937.4px;top:664.3px;font-size:14px;color:#6a6f77;font-weight:normal;">0</div>
<div class="t" style="left:1023.6px;top:664.3px;font-size:14px;color:#6a6f77;font-weight:normal;">0</div>
<div class="t" style="left:1080.0px;top:664.3px;font-size:14px;color:#6a6f77;font-weight:normal;letter-spacing:-0.231px;">Rs0.00</div>
<div class="t" style="left:1182.4px;top:664.3px;font-size:14px;color:#6a6f77;font-weight:normal;letter-spacing:-0.231px;">Rs0.00</div>
<div class="t" style="left:1252.6px;top:664.3px;font-size:14px;color:#6a6f77;font-weight:normal;letter-spacing:-0.231px;">Rs0.00</div>
<div class="t" style="left:1356.5px;top:664.3px;font-size:14px;color:#6a6f77;font-weight:normal;letter-spacing:0.430px;">07/03/24</div>
<div class="a" style="left:1456.9px;top:664.2px;width:3.2px;height:3.2px;border-radius:50%;background:#1f2937"></div>
<div class="a" style="left:1456.9px;top:669.6px;width:3.2px;height:3.2px;border-radius:50%;background:#1f2937"></div>
<div class="a" style="left:1456.9px;top:675.0px;width:3.2px;height:3.2px;border-radius:50%;background:#1f2937"></div>
<div class="a" style="left:307px;top:747px;width:1182.5px;height:1px;background:#eaecf0"></div>
<div class="a" style="left:318px;top:714.5px;width:15px;height:15px;background:#fff;border:1px solid #d5d9e0;border-radius:4px"></div>
<div class="a" style="left:353.5px;top:711.5px;width:21px;height:21px;border-radius:50%;background:#eef0f2"></div>
<svg class="a" style="left:356px;top:714px;" width="16" height="16" viewBox="0 0 16 16"><circle cx="8" cy="6" r="2.8" fill="#e1e3e7"/><path d="M3 14c.8-2.4 2.8-3.6 5-3.6s4.2 1.2 5 3.6" fill="#e1e3e7"/></svg>
<div class="t" style="left:383.6px;top:715.3px;font-size:14px;color:#5aa2c9;font-weight:normal;">Myfirst Tier</div>
<div class="t" style="left:555.6px;top:715.3px;font-size:14px;color:#6a6f77;font-weight:normal;letter-spacing:-0.1px;">myfirst@tier.co.</div>
<svg class="a" style="left:709px;top:711px;" width="18" height="18" viewBox="0 0 18 18"><circle cx="9" cy="9" r="7.6" fill="none" stroke="#42b772" stroke-width="1.5"/><path d="M7.4 5.9v6.2L11.8 9z" fill="none" stroke="#42b772" stroke-width="1.4" stroke-linejoin="round"/></svg>
<div class="t" style="left:768.4px;top:715.3px;font-size:14px;color:#6a6f77;font-weight:normal;">3 tier campaign</div>
<div class="t" style="left:937.4px;top:715.3px;font-size:14px;color:#6a6f77;font-weight:normal;">0</div>
<div class="t" style="left:1023.6px;top:715.3px;font-size:14px;color:#6a6f77;font-weight:normal;">0</div>
<div class="t" style="left:1080.0px;top:715.3px;font-size:14px;color:#6a6f77;font-weight:normal;letter-spacing:-0.231px;">Rs0.00</div>
<div class="t" style="left:1182.4px;top:715.3px;font-size:14px;color:#6a6f77;font-weight:normal;letter-spacing:-0.231px;">Rs0.00</div>
<div class="t" style="left:1252.6px;top:715.3px;font-size:14px;color:#6a6f77;font-weight:normal;letter-spacing:-0.231px;">Rs0.00</div>
<div class="t" style="left:1356.5px;top:715.3px;font-size:14px;color:#6a6f77;font-weight:normal;letter-spacing:0.430px;">07/03/24</div>
<div class="a" style="left:1456.9px;top:715.2px;width:3.2px;height:3.2px;border-radius:50%;background:#1f2937"></div>
<div class="a" style="left:1456.9px;top:720.6px;width:3.2px;height:3.2px;border-radius:50%;background:#1f2937"></div>
<div class="a" style="left:1456.9px;top:726.0px;width:3.2px;height:3.2px;border-radius:50%;background:#1f2937"></div>
<div class="a" style="left:307px;top:798px;width:1182.5px;height:1px;background:#eaecf0"></div>
<div class="a" style="left:318px;top:765.5px;width:15px;height:15px;background:#fff;border:1px solid #d5d9e0;border-radius:4px"></div>
<div class="a" style="left:353.5px;top:762.5px;width:21px;height:21px;border-radius:50%;background:#eef0f2"></div>
<svg class="a" style="left:356px;top:765px;" width="16" height="16" viewBox="0 0 16 16"><circle cx="8" cy="6" r="2.8" fill="#e1e3e7"/><path d="M3 14c.8-2.4 2.8-3.6 5-3.6s4.2 1.2 5 3.6" fill="#e1e3e7"/></svg>
<div class="t" style="left:383.6px;top:766.3px;font-size:14px;color:#5aa2c9;font-weight:normal;">Second Tier</div>
<div class="t" style="left:555.6px;top:766.3px;font-size:14px;color:#6a6f77;font-weight:normal;letter-spacing:-0.1px;">second@tier.com.</div>
<svg class="a" style="left:709px;top:762px;" width="18" height="18" viewBox="0 0 18 18"><circle cx="9" cy="9" r="7.6" fill="none" stroke="#42b772" stroke-width="1.5"/><path d="M7.4 5.9v6.2L11.8 9z" fill="none" stroke="#42b772" stroke-width="1.4" stroke-linejoin="round"/></svg>
<div class="t" style="left:768.4px;top:766.3px;font-size:14px;color:#6a6f77;font-weight:normal;">3 tier campaign</div>
<div class="t" style="left:937.4px;top:766.3px;font-size:14px;color:#6a6f77;font-weight:normal;">0</div>
<div class="t" style="left:1023.6px;top:766.3px;font-size:14px;color:#6a6f77;font-weight:normal;">0</div>
<div class="t" style="left:1080.0px;top:766.3px;font-size:14px;color:#6a6f77;font-weight:normal;letter-spacing:-0.231px;">Rs0.00</div>
<div class="t" style="left:1182.4px;top:766.3px;font-size:14px;color:#6a6f77;font-weight:normal;letter-spacing:-0.231px;">Rs0.00</div>
<div class="t" style="left:1252.6px;top:766.3px;font-size:14px;color:#6a6f77;font-weight:normal;letter-spacing:-0.231px;">Rs0.00</div>
<div class="t" style="left:1356.5px;top:766.3px;font-size:14px;color:#6a6f77;font-weight:normal;letter-spacing:0.430px;">07/03/24</div>
<div class="a" style="left:1456.9px;top:766.2px;width:3.2px;height:3.2px;border-radius:50%;background:#1f2937"></div>
<div class="a" style="left:1456.9px;top:771.6px;width:3.2px;height:3.2px;border-radius:50%;background:#1f2937"></div>
<div class="a" style="left:1456.9px;top:777.0px;width:3.2px;height:3.2px;border-radius:50%;background:#1f2937"></div>
<div class="t" style="left:340.8px;top:825.9px;font-size:13.5px;color:#6b7280;font-weight:normal;letter-spacing:-0.038px;">Showing 1 to 10 of 184 Records</div>
<div class="a" style="left:1319.5px;top:815px;width:82px;height:36px;background:#fff;border:1px solid #eceef2;border-radius:8px"></div>
<div class="t" style="left:1334.0px;top:826.5px;font-size:13.5px;color:#a3a8b0;font-weight:normal;letter-spacing:0.068px;">Previous</div>
<div class="a" style="left:1409.5px;top:815px;width:58.5px;height:36px;background:#fff;border:1px solid #dfe2e7;border-radius:8px;box-shadow:0 1px 2px rgba(16,24,40,.05)"></div>
<div class="t" style="left:1424.5px;top:826.5px;font-size:13.5px;color:#1f2937;font-weight:normal;letter-spacing:0.248px;-webkit-text-stroke:0.25px #1f2937;">Next</div>
<div class="a" style="left:780px;top:85px;width:103.5px;height:170px;background:#fff;border-radius:0 0 8px 8px;box-shadow:0 4px 10px rgba(16,24,40,.10)"></div>
<div class="t" style="left:803.0px;top:94.2px;font-size:13px;color:#353b45;font-weight:normal;letter-spacing:-0.179px;-webkit-text-stroke:0.3px #353b45;">Campaign</div>
<div class="t" style="left:803.0px;top:127.5px;font-size:13px;color:#3d93c6;font-weight:normal;-webkit-text-stroke:0.3px #3d93c6;">Affiliate</div>
<div class="t" style="left:803.0px;top:161.6px;font-size:13px;color:#353b45;font-weight:normal;-webkit-text-stroke:0.3px #353b45;">Payout</div>
<div class="t" style="left:803.0px;top:195.1px;font-size:13px;color:#353b45;font-weight:normal;-webkit-text-stroke:0.3px #353b45;">Media</div>
<div class="t" style="left:803.0px;top:228.5px;font-size:13px;color:#353b45;font-weight:normal;-webkit-text-stroke:0.3px #353b45;">Settings</div>
<div class="a" style="left:744px;top:40px;width:146px;height:44px;border:4px solid #df4d30"></div>
<div class="a" style="left:744px;top:112.5px;width:146px;height:42.5px;border:4px solid #df4d30"></div>
<div class="a" style="left:0px;top:426px;width:204px;height:48.5px;border:4px solid #df4d30"></div>
<svg class="a" style="left:0px;top:0px;pointer-events:none" width="1600" height="871" viewBox="0 0 1600 871"><line x1="202" y1="450" x2="738.5" y2="67.2" stroke="#df4d30" stroke-width="1.7"/><path d="M744.5 62.8 735.4 64.2 740.2 70.9z" fill="#df4d30"/><line x1="817.2" y1="84" x2="817.2" y2="105" stroke="#df4d30" stroke-width="1.7"/><path d="M812 104.5h10.4l-5.2 7.5z" fill="#df4d30"/></svg>
<div class="a" style="left:202px;top:856px;width:358px;height:13px;background:linear-gradient(to bottom, rgba(200,203,210,0), rgba(200,203,210,.4))"></div>
<div class="a" style="left:0px;top:869px;width:202px;height:2px;background:#4b5260"></div>
<div class="a" style="left:202px;top:869px;width:358px;height:2px;background:#bfc2c8"></div>
<div class="a" style="left:190.8px;top:851.5px;width:19px;height:19px;border-radius:50%;background:#33c887;box-shadow:0 0 0 .8px #1f5e44"></div>
<svg class="a" style="left:195px;top:855px;" width="10" height="12" viewBox="0 0 10 12"><path d="M6.8 1.8 3.2 6l3.6 4.2" fill="none" stroke="#0b5a32" stroke-width="2.3" stroke-linecap="round" stroke-linejoin="round"/></svg>
</body></html>
